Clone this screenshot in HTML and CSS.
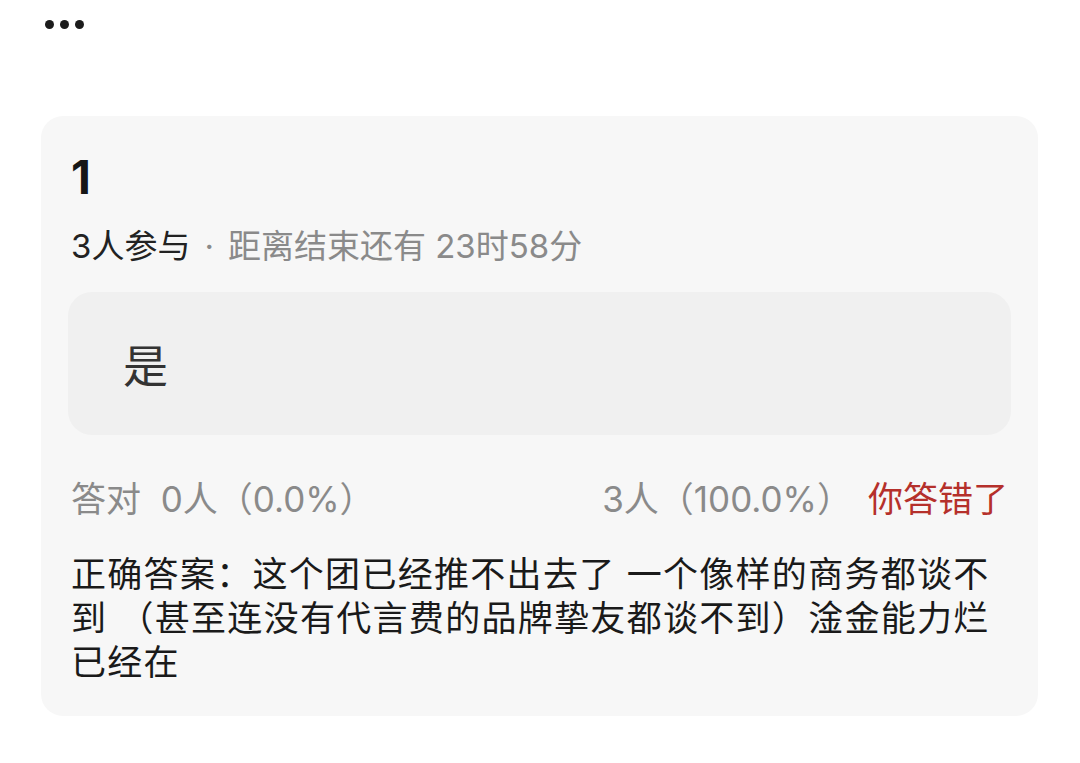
FILE: index.html
```html
<!DOCTYPE html>
<html lang="zh-CN">
<head>
<meta charset="utf-8">
<title>竞猜</title>
<link rel="stylesheet" href="styles.css">
</head>
<body>
<div class="page">
  <header class="topbar">
    <div class="more" aria-label="更多">
      <span class="dot"></span><span class="dot"></span><span class="dot"></span>
    </div>
  </header>

  <section class="card">
    <h1 class="title">1</h1>
    <p class="meta"><span class="count">3人参与</span><span class="sep">·</span><span class="remain">距离结束还有 23时58分</span></p>

    <div class="option">是</div>

    <div class="stats">
      <span class="right-count">答对&nbsp; 0人（0.0%）</span>
      <span class="wrong-group">
        <span class="wrong-count">3人（100.0%）</span>
        <span class="verdict">你答错了</span>
      </span>
    </div>

    <p class="answer">正确答案：这个团已经推不出去了 一个像样的商务都谈不到 （甚至连没有代言费的品牌挚友都谈不到）淦金能力烂<br>已经在</p>
  </section>
</div>
</body>
</html>
```

FILE: styles.css
```css
html, body {
  margin: 0;
  padding: 0;
  background: #ffffff;
}

body {
  font-family: Inter, "Noto Sans CJK SC", sans-serif;
  color: #1a1a1a;
}

.page {
  padding: 0 42px 40px 41px;
}

.topbar {
  height: 116px;
  box-sizing: border-box;
  padding: 20px 0 0 4px;
}

.more {
  display: flex;
  gap: 6px;
}

.dot {
  width: 9px;
  height: 9px;
  border-radius: 50%;
  background: #1c1c1c;
}

.card {
  background: #f7f7f7;
  border-radius: 22px;
  padding: 38px 27px 32px 27px;
}

.title {
  margin: 0;
  padding: 0 3px;
  font-size: 46px;
  line-height: 46px;
  font-weight: 700;
  color: #161616;
}

.meta {
  margin: 24px 0 0;
  padding: 0 3px;
  font-size: 33px;
  line-height: 44px;
  color: #8a8a8a;
  white-space: nowrap;
}

.meta .count {
  color: #222222;
}

.meta .sep {
  margin: 0 14px;
}

.option {
  margin-top: 24px;
  height: 143px;
  box-sizing: border-box;
  background: #f0f0f0;
  border-radius: 24px;
  display: flex;
  align-items: center;
  padding-left: 55px;
  font-size: 45px;
  color: #333333;
}

.stats {
  margin-top: 42px;
  padding: 0 3px;
  display: flex;
  justify-content: space-between;
  font-size: 35px;
  line-height: 44px;
  color: #8a8a8a;
  white-space: nowrap;
}

.wrong-group {
  display: flex;
  gap: 16px;
}

.verdict {
  color: #b5302b;
}

.answer {
  margin: 31px 0 0;
  padding: 0 3px;
  font-size: 35px;
  line-height: 44px;
  letter-spacing: 1.3px;
  color: #1a1a1a;
}
```
